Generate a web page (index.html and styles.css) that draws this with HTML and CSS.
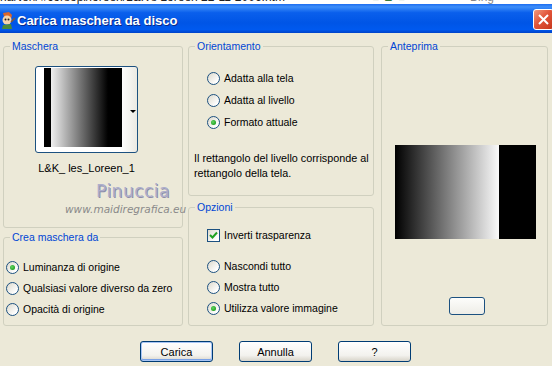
FILE: index.html
```html
<!DOCTYPE html>
<html lang="it">
<head>
  <meta charset="UTF-8">
  <title>Carica maschera da disco</title>
  <link rel="stylesheet" href="styles.css">
</head>
<body>

<div class="topstrip">
  <span class="url">riaNel\l #corsopi/loreen/L&amp;K's Loreen 22-11-2006.htm</span>
  <span class="tools">&#9632; &#9650; &#9632;</span>
  <span class="bing">Bing</span>
</div>

<div class="titlebar">
  <svg class="appicon" width="16" height="18" viewBox="0 0 16 18">
    <path d="M3 2 L9 1 L12 4 L11 8 L5 9 Z" fill="#d9652b"/>
    <circle cx="7" cy="9" r="4.5" fill="#f3d3ad"/>
    <circle cx="5.5" cy="8.5" r="1" fill="#222"/>
    <circle cx="8.5" cy="8.5" r="1" fill="#222"/>
    <path d="M3 14 L11 13 L12 18 L2 18 Z" fill="#4a8a3a"/>
    <path d="M11 11 L15 7" stroke="#8a5a2a" stroke-width="1.5"/>
  </svg>
  <span class="title">Carica maschera da disco</span>
  <span class="close">
    <svg width="11" height="11" viewBox="0 0 11 11"><path d="M1 1 L10 10 M10 1 L1 10" stroke="#fff" stroke-width="2"/></svg>
  </span>
</div>

<div class="dialog">
  <div class="groups">

    <div class="col col1">
      <div class="group g-maschera">
        <div class="legend">Maschera</div>
        <div class="thumb">
          <div class="mask-img"></div>
          <div class="arrow"></div>
        </div>
        <div class="thumb-label">L&amp;K_ les_Loreen_1</div>
        <div class="wm-name">Pinuccia</div>
        <div class="wm-site">www.maidiregrafica.eu</div>
      </div>

      <div class="group g-crea">
        <div class="legend">Crea maschera da</div>
        <div class="options crea-opts">
          <div class="opt"><span class="radio checked"></span>Luminanza di origine</div>
          <div class="opt"><span class="radio"></span>Qualsiasi valore diverso da zero</div>
          <div class="opt"><span class="radio"></span>Opacità di origine</div>
        </div>
      </div>
    </div>

    <div class="col col2">
      <div class="group g-orient">
        <div class="legend">Orientamento</div>
        <div class="options orient-opts">
          <div class="opt"><span class="radio"></span>Adatta alla tela</div>
          <div class="opt"><span class="radio"></span>Adatta al livello</div>
          <div class="opt"><span class="radio checked"></span>Formato attuale</div>
        </div>
        <p class="desc">Il rettangolo del livello corrisponde al rettangolo della tela.</p>
      </div>

      <div class="group g-opzioni">
        <div class="legend">Opzioni</div>
        <div class="opt check-row"><span class="checkbox"><svg width="9" height="9" viewBox="0 0 9 9"><path d="M1 4 L3.5 6.5 L8 1.5" stroke="#21a121" stroke-width="2" fill="none"/></svg></span>Inverti trasparenza</div>
        <div class="options opz-opts">
          <div class="opt"><span class="radio"></span>Nascondi tutto</div>
          <div class="opt"><span class="radio"></span>Mostra tutto</div>
          <div class="opt"><span class="radio checked"></span>Utilizza valore immagine</div>
        </div>
      </div>
    </div>

    <div class="col col3">
      <div class="group g-anteprima">
        <div class="legend">Anteprima</div>
        <div class="preview"></div>
        <div class="small-btn"></div>
      </div>
    </div>

  </div>

  <div class="buttons">
    <button class="btn default">Carica</button>
    <button class="btn">Annulla</button>
    <button class="btn">?</button>
  </div>
</div>

</body>
</html>
```

FILE: styles.css
```css
body { margin: 0; background: #ECE9D8; font-family: "Liberation Sans", Arial, sans-serif; font-size: 10.5px; line-height: 13px; color: #000; overflow: hidden; }

.topstrip { height: 4px; overflow: hidden; background: #fff; display: flex; white-space: nowrap; }
.topstrip span { margin-top: -9px; font-size: 12px; line-height: 13px; }
.topstrip .url { width: 372px; color: #222; }
.topstrip .tools { width: 98px; color: #3a7a3a; }
.topstrip .bing { color: #888; }

.titlebar { height: 29px; display: flex; align-items: center; background: linear-gradient(#1d6df0 0%, #3d8ef9 10%, #0a5fec 30%, #0055e6 65%, #0059ef 88%, #0043c8 100%); }
.appicon { margin: 2px 0 0 0; }
.title { margin: 3px 0 0 1px; color: #fff; font-weight: bold; font-size: 13px; text-shadow: 1px 1px 0 #0a2a8a; flex: 1; }
.close { width: 21px; height: 21px; margin: 2px -2px 0 0; box-sizing: border-box; border: 1px solid #fff; border-radius: 3px; background: linear-gradient(135deg, #f09a7e, #e2553a 45%, #c6371c); display: flex; align-items: center; justify-content: center; }

.dialog { padding: 13px 0 0 3px; }
.groups { display: flex; }
.col { display: flex; flex-direction: column; }
.col1 { width: 180px; }
.col2 { width: 186px; margin-left: 5px; }
.col3 { width: 167px; margin-left: 7px; }

.group { border: 1px solid #D0D0BF; border-radius: 3px; box-sizing: border-box; }
.legend { display: table; margin: -7px 0 0 6px; padding: 0 2px; background: #ECE9D8; color: #0046D5; }

.g-maschera { height: 182px; }
.g-crea { height: 89px; margin-top: 9px; }
.g-orient { height: 150px; }
.g-opzioni { height: 119px; margin-top: 11px; }
.g-anteprima { height: 280px; }

.thumb { width: 103px; height: 87px; margin: 13px 0 0 31px; box-sizing: border-box; border: 1px solid #1C5180; border-radius: 3px; background: linear-gradient(to right, #fff 84%, #ebeae3); display: flex; align-items: center; }
.mask-img { width: 78px; height: 79px; margin: 1px 0 0 8px; align-self: flex-start; background: linear-gradient(to right, #000 0, #000 7px, #f0f0f0 7px, #000 64px, #000 78px); }
.arrow { margin: 4px 0 0 8px; width: 0; height: 0; border-left: 3px solid transparent; border-right: 3px solid transparent; border-top: 3px solid #000; }
.thumb-label { width: 103px; margin: 9px 0 0 31px; font-size: 11px; text-align: center; white-space: nowrap; }

.wm-name { margin: 6px 0 0 92px; font-family: "DejaVu Sans", sans-serif; font-size: 17px; line-height: 20px; color: #adaecb; letter-spacing: 0.5px; text-shadow: 1px 1px 0 #8c8daa; }
.wm-site { margin: 2px 0 0 61px; font-family: "DejaVu Sans", sans-serif; font-size: 10.5px; font-style: italic; color: #8a8a8a; white-space: nowrap; }

.opt { display: flex; align-items: center; gap: 4px; white-space: nowrap; }
.radio { width: 13px; height: 13px; box-sizing: border-box; border: 1px solid #1C5180; border-radius: 50%; background: linear-gradient(135deg, #dcd9cc, #fff 80%); display: flex; align-items: center; justify-content: center; }
.radio.checked::after { content: ""; width: 5px; height: 5px; border-radius: 50%; background: radial-gradient(circle at 40% 40%, #64d664, #21a121 70%); }
.checkbox { width: 13px; height: 13px; box-sizing: border-box; border: 1px solid #1C5180; background: linear-gradient(135deg, #dcd9cc, #fff 80%); display: flex; align-items: center; justify-content: center; }

.crea-opts { margin: 13px 0 0 2px; }
.crea-opts .opt { height: 21px; }
.orient-opts { margin: 14px 0 0 18px; }
.orient-opts .opt { height: 22px; }
.desc { margin: 18px 0 0 5px; font-size: 10.8px; line-height: 15px; width: 178px; }
.check-row { height: 22px; margin: 10px 0 0 18px; }
.opz-opts { margin: 10px 0 0 18px; }
.opz-opts .opt { height: 21px; }

.preview { width: 141px; height: 94px; margin: 92px 0 0 13px; background: linear-gradient(to right, #000 0, #fafafa 104px, #000 104px, #000 141px); }
.small-btn { width: 36px; height: 18px; margin: 58px 0 0 67px; box-sizing: border-box; border: 1px solid #1C5180; border-radius: 3px; background: linear-gradient(#fdfdfb, #eeede7); }

.buttons { display: flex; gap: 26px; margin: 15px 0 0 137px; }
.btn { width: 73px; height: 21px; padding: 0; box-sizing: border-box; border: 1px solid #003C74; border-radius: 3px; background: linear-gradient(#fff, #f3f2ee 70%, #d8d4ca); font-family: "Liberation Sans", Arial, sans-serif; font-size: 11px; color: #000; }
.btn.default { box-shadow: inset 0 0 0 1px #a9c6f5, inset 0 -1px 0 1px #7ba2e7; }
```
